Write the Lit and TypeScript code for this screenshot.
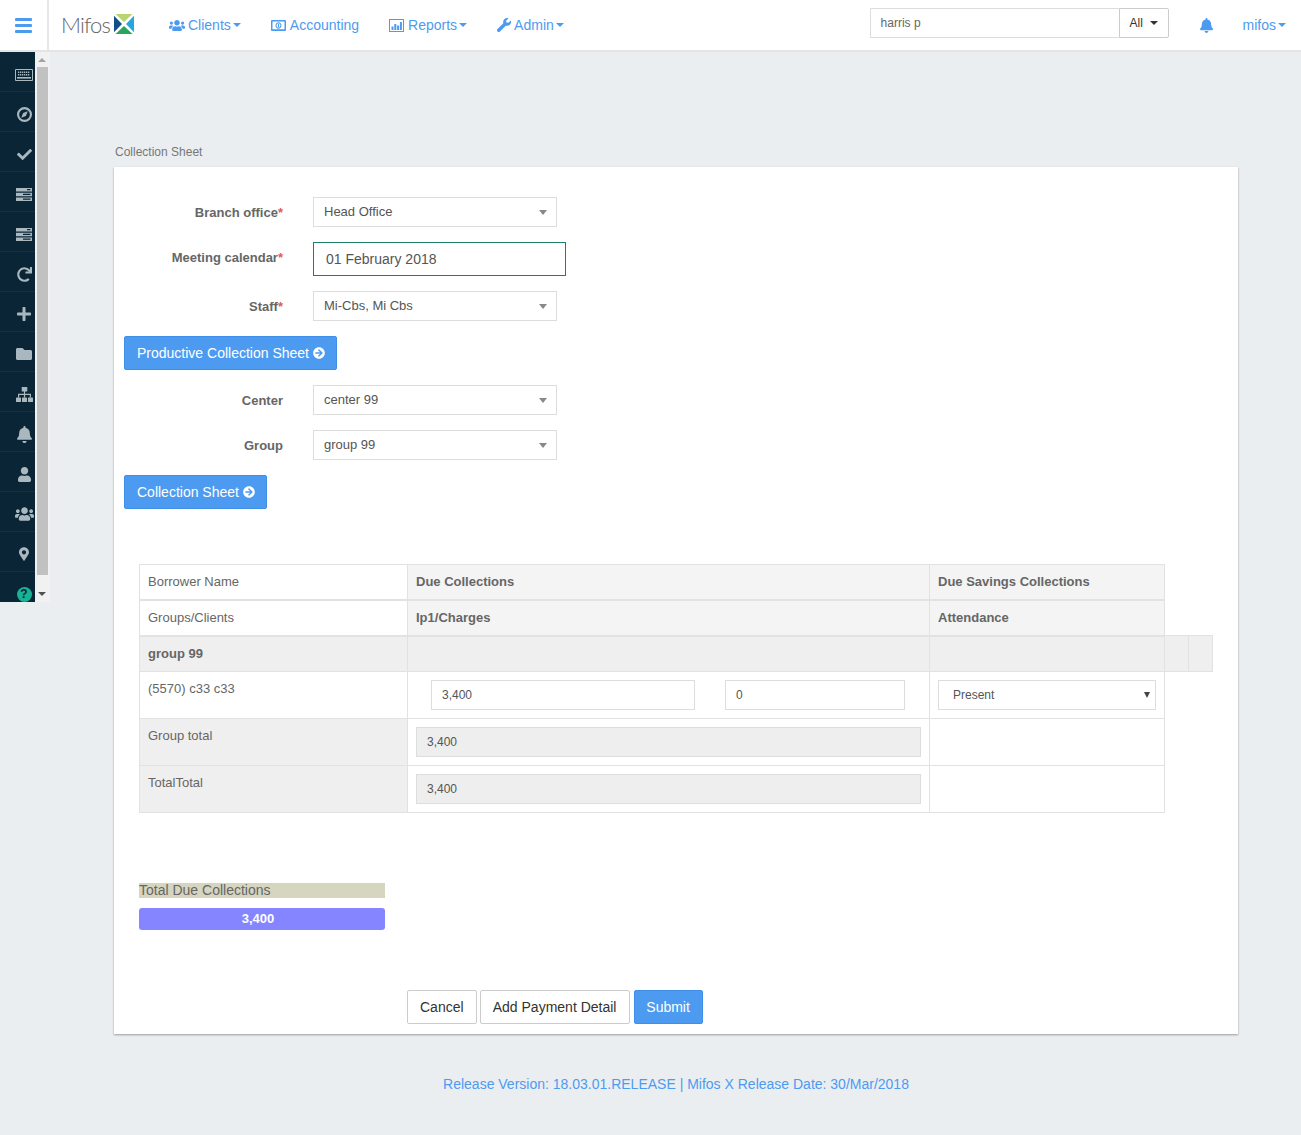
import { LitElement, html, css, svg } from "lit";
import { customElement } from "lit/decorators.js";

const P = {
  users: ["0 0 640 512", "M96 224c35.300 0 64-28.700 64-64s-28.700-64-64-64-64 28.700-64 64 28.700 64 64 64zm448 0c35.300 0 64-28.700 64-64s-28.700-64-64-64-64 28.700-64 64 28.700 64 64 64zm32 32h-64c-17.600 0-33.500 7.100-45.100 18.600 40.300 22.100 68.900 62 75.100 109.400h66c17.700 0 32-14.300 32-32v-32c0-35.300-28.700-64-64-64zm-256 0c61.900 0 112-50.100 112-112S381.900 32 320 32 208 82.100 208 144s50.100 112 112 112zm76.800 32h-8.300c-20.800 10-43.900 16-68.500 16s-47.600-6-68.500-16h-8.300C179.600 288 128 339.600 128 403.200V432c0 26.500 21.500 48 48 48h288c26.500 0 48-21.500 48-48v-28.800c0-63.600-51.600-115.200-115.200-115.200zm-223.700-13.400C161.500 263.100 145.600 256 128 256H64c-35.300 0-64 28.700-64 64v32c0 17.700 14.300 32 32 32h65.900c6.300-47.400 34.900-87.300 75.200-109.400z"],
  bell: ["0 0 448 512", "M224 512c35.320 0 63.970-28.650 63.970-64H160.030c0 35.350 28.650 64 63.970 64zm215.390-149.710c-19.320-20.760-55.470-51.990-55.470-154.290 0-77.700-54.480-139.900-127.940-155.160V32c0-17.670-14.320-32-31.980-32s-31.980 14.330-31.980 32v20.840C118.560 68.100 64.080 130.300 64.080 208c0 102.300-36.150 133.530-55.470 154.290-6 6.450-8.660 14.160-8.610 21.710.11 16.400 12.980 32 32.100 32h383.800c19.120 0 32-15.600 32.100-32 .05-7.550-2.610-15.270-8.610-21.710z"],
  wrench: ["0 0 512 512", "M507.730 109.100c-2.240-9.030-13.540-12.090-20.120-5.510l-74.360 74.360-67.880-11.310-11.310-67.880 74.360-74.360c6.620-6.620 3.430-17.900-5.660-20.160-47.380-11.740-99.550.91-136.580 37.930-39.640 39.640-50.550 97.100-34.050 147.200L18.740 402.760c-24.990 24.990-24.990 65.510 0 90.500 24.990 24.990 65.510 24.990 90.500 0l213.210-213.210c50.120 16.710 107.470 5.680 147.370-34.220 37.070-37.070 49.700-89.320 37.910-136.730z"],
  arrow: ["0 0 512 512", "M256 8c137 0 248 111 248 248S393 504 256 504 8 393 8 256 119 8 256 8zm-28.900 143.600l75.500 72.400H120c-13.300 0-24 10.700-24 24v16c0 13.300 10.700 24 24 24h182.600l-75.500 72.400c-9.700 9.300-9.900 24.800-.4 34.300l11 10.900c9.400 9.400 24.600 9.400 33.900 0L404.300 273c9.400-9.400 9.400-24.600 0-33.900L271.600 106.700c-9.400-9.400-24.600-9.400-33.900 0l-11 10.900c-9.300 9.600-9.100 25.100.4 34.400z"],
  check: ["0 0 512 512", "M173.898 439.404l-166.400-166.400c-9.997-9.997-9.997-26.206 0-36.204l36.203-36.204c9.997-9.998 26.207-9.998 36.204 0L192 312.690 432.095 72.596c9.997-9.997 26.207-9.997 36.204 0l36.203 36.204c9.997 9.997 9.997 26.206 0 36.204l-294.400 294.401c-9.998 9.997-26.207 9.997-36.204-.001z"],
  folder: ["0 0 512 512", "M464 128H272l-64-64H48C21.490 64 0 85.490 0 112v288c0 26.510 21.490 48 48 48h416c26.510 0 48-21.490 48-48V176c0-26.510-21.490-48-48-48z"],
  marker: ["0 0 384 512", "M172.268 501.670C26.970 291.031 0 255.403 0 192 0 85.961 85.961 0 192 0s192 85.961 192 192c0 63.403-26.970 99.031-172.268 309.670-9.535 13.774-29.930 13.773-39.464 0zM192 272c44.183 0 80-35.817 80-80s-35.817-80-80-80-80 35.817-80 80 35.817 80 80 80z"],
  redo: ["0 0 512 512", "M500.330 0h-47.410a12 12 0 0 0-12 12.570l4 82.760A247.420 247.420 0 0 0 256 8C119.340 8 7.900 119.530 8 256.190 8.100 393.070 119.100 504 256 504a247.100 247.100 0 0 0 166.180-63.910 12 12 0 0 0 .48-17.430l-34-34a12 12 0 0 0-16.380-.55A176 176 0 1 1 402.100 157.800l-101.530-4.870a12 12 0 0 0-12.570 12v47.410a12 12 0 0 0 12 12h200.330a12 12 0 0 0 12-12V12a12 12 0 0 0-12-12z"],
  plus: ["0 0 448 512", "M416 208H272V64c0-17.670-14.330-32-32-32h-32c-17.670 0-32 14.330-32 32v144H32c-17.670 0-32 14.330-32 32v32c0 17.670 14.330 32 32 32h144v144c0 17.670 14.330 32 32 32h32c17.670 0 32-14.330 32-32V304h144c17.670 0 32-14.330 32-32v-32c0-17.670-14.330-32-32-32z"],
  user: ["0 0 448 512", "M224 256c70.700 0 128-57.300 128-128S294.700 0 224 0 96 57.300 96 128s57.300 128 128 128zm89.600 32h-16.700c-22.200 10.200-46.900 16-72.900 16s-50.600-5.800-72.900-16h-16.700C60.200 288 0 348.200 0 422.400V464c0 26.500 21.500 48 48 48h352c26.500 0 48-21.500 48-48v-41.600c0-74.200-60.200-134.400-134.400-134.400z"],
};

const ic = (k: keyof typeof P, w: number, h: number) =>
  html`<svg class="ic" width=${w} height=${h} viewBox=${P[k][0]} fill="currentColor"><path d=${P[k][1]}></path></svg>`;

const keyboard = html`<svg class="ic kb" width="18" height="12" viewBox="0 0 18 12" fill="currentColor">
  <path fill-rule="evenodd" d="M1 0h16a1 1 0 0 1 1 1v10a1 1 0 0 1-1 1H1a1 1 0 0 1-1-1V1a1 1 0 0 1 1-1zm0 1v10h16V1z"></path>
  ${[3, 5, 7, 9, 11, 13].map((x) => svg`<rect x=${x} y="2.500" width="1.300" height="1.500"></rect><rect x=${x} y="5" width="1.300" height="1.500"></rect>`)}
  <rect x="2" y="8" width="14" height="1.600"></rect></svg>`;

const compass = html`<svg class="ic" width="15" height="15" viewBox="0 0 14 14" fill="currentColor">
  <path fill-rule="evenodd" d="M7 0a7 7 0 1 1 0 14A7 7 0 0 1 7 0zm0 2a5 5 0 1 0 0 10A5 5 0 0 0 7 2z"></path>
  <path d="M10 4 8.300 8.300 4 10l1.700-4.300z"></path></svg>`;

const server = html`<svg class="ic" width="16" height="13" viewBox="0 0 16 13" fill="currentColor">
  <path fill-rule="evenodd" d="M0 0h16v3.500H0zM11 1v1.200h3.500V1zM0 4.700h16v3.500H0zM7 5.700v1.200h7.500V5.700zM0 9.500h16V13H0zM7 10.500v1.200h7.500v-1.200z"></path></svg>`;

const sitemap = html`<svg class="ic" width="17" height="15" viewBox="0 0 17 15" fill="currentColor">
  <rect x="5.700" y="0" width="5.600" height="4.500" rx=".6"></rect>
  <rect x="0" y="10.500" width="5" height="4.500" rx=".6"></rect>
  <rect x="6" y="10.500" width="5" height="4.500" rx=".6"></rect>
  <rect x="12" y="10.500" width="5" height="4.500" rx=".6"></rect>
  <path d="M7.900 4h1.200v2.800h5.900v3.700h-1.200V8H9.100v2.500H7.900V8H3.200v2.500H2V6.800h5.900z"></path></svg>`;

const question = html`<span class="q">?</span>`;

const money = html`<svg class="ic" width="15" height="11" viewBox="0 0 15 11" fill="currentColor">
  <path fill-rule="evenodd" d="M1 0h13a1 1 0 0 1 1 1v9a1 1 0 0 1-1 1H1a1 1 0 0 1-1-1V1a1 1 0 0 1 1-1zm.600 1.600a1 1 0 0 1-.1.1v7.600h12V1.600z"></path>
  <path fill-rule="evenodd" d="M7.500 2.200c1.700 0 3 1.500 3 3.300s-1.300 3.300-3 3.300-3-1.500-3-3.300 1.300-3.300 3-3.300zm0 1.100c-1.100 0-1.900 1-1.900 2.200s.8 2.200 1.900 2.200 1.900-1 1.900-2.200-.8-2.200-1.900-2.200z"></path>
  <rect x="7" y="3.800" width="1.100" height="3.400"></rect></svg>`;

const chart = html`<svg class="ic" width="15" height="13" viewBox="0 0 15 13" fill="currentColor">
  <path fill-rule="evenodd" d="M0 0h15v13H0zm1 1v11h13V1z"></path>
  <rect x="2.500" y="7.500" width="2" height="3.500"></rect><rect x="5.300" y="5" width="2" height="6"></rect>
  <rect x="8.100" y="6.500" width="2" height="4.500"></rect><rect x="10.900" y="3" width="2" height="8"></rect></svg>`;

const logo = html`<svg class="mark" width="20" height="20" viewBox="0 0 20 20">
  <polygon points="1.500,0 18.500,0 10,8" fill="#b7d672"></polygon>
  <polygon points="0,1.800 8,10 0,18.200" fill="#124f85"></polygon>
  <polygon points="20,1.800 20,18.200 12,10" fill="#27a6dc"></polygon>
  <polygon points="1.500,20 10,12 18.500,20" fill="#2aa65c"></polygon></svg>`;

@customElement("app-root")
export class AppRoot extends LitElement {
  static styles = css`
    :host { display: block; min-height: 1135px; background: #ebeef1; font-family: "Liberation Sans", Arial, sans-serif; color: #666; font-size: 13px; line-height: 18.57px; }
    * { box-sizing: border-box; }
    .ic { display: block; flex: none; }
    .mark { display: block; flex: none; margin-top: -2px; }
    .top { height: 52px; background: #fff; border-bottom: 2px solid #e4e4e4; display: flex; align-items: center; color: #4d9bf0; font-size: 14px; }
    .burger { width: 49px; height: 50px; border-right: 2px solid #e7e7e7; display: flex; flex-direction: column; gap: 3px; align-items: center; justify-content: center; padding-right: 1px; }
    .burger i { display: block; width: 17px; height: 3px; background: #4d9bf0; border-radius: 1px; }
    .logo { display: flex; align-items: center; margin-left: 12px; width: 73px; justify-content: space-between; }
    .logo span { font-family: Lato, sans-serif; font-weight: 300; font-size: 22px; letter-spacing: -.9px; color: #666; line-height: 30px; }
    .nav { display: flex; align-items: center; gap: 30px; margin-left: 35px; flex: 1; }
    .nav a { display: flex; align-items: center; gap: 3px; }
    .nav a.wide { gap: 4px; }
    .caret { display: inline-block; width: 0; height: 0; border-left: 4px solid transparent; border-right: 4px solid transparent; border-top: 4px solid currentColor; }
    .nav .caret { margin-left: -1px; }
    .nav .wide .caret { margin-left: -2px; }
    .search { display: flex; height: 30px; width: 299px; font-size: 12px; align-self: flex-start; margin-top: 8px; }
    .search .q1 { flex: 1; border: 1px solid #ddd; border-right: 0; padding: 5px 10px; color: #666; }
    .search .all { width: 50px; border: 1px solid #ccc; border-radius: 0 2px 2px 0; color: #333; padding: 5px 10px; display: flex; align-items: center; justify-content: space-between; }
    .search .caret { color: #333; }
    .bell { margin-left: 31px; color: #4d9bf0; }
    .me { margin-left: 30px; margin-right: 15px; display: flex; align-items: center; gap: 2px; }
    .body { display: flex; align-items: flex-start; }
    .side { width: 50px; height: 550px; flex: none; display: flex; overflow: hidden; }
    .rail { width: 35px; background: #0a2536; color: #a9b8be; }
    .rail div { height: 40px; border-bottom: 1px solid #1d2d38; display: flex; align-items: center; justify-content: center; padding: 5px 0 0 13px; width: 35px; }
    .kb { margin-top: 1px; }
    .q { width: 15px; height: 15px; border-radius: 50%; background: #16b394; color: #0a2536; font-weight: 700; font-size: 12px; line-height: 15px; text-align: center; display: block; flex: none; }
    .bar { width: 15px; background: #f1f1f1; display: flex; flex-direction: column; align-items: center; padding-right: 1px; }
    .up { width: 0; height: 0; border-left: 4px solid transparent; border-right: 4px solid transparent; border-bottom: 4px solid #a3a3a3; margin-top: 6px; }
    .thumb { width: 11px; height: 508px; background: #c1c1c1; margin: 5px 0 0 1px; }
    .down { width: 0; height: 0; border-left: 4px solid transparent; border-right: 4px solid transparent; border-top: 4px solid #505050; margin-top: 17px; }
    .main { flex: 1; padding: 91px 63px 0 64px; }
    .crumb { font-size: 12px; color: #777; margin: 0 0 6px 1px; line-height: 18px; height: 18px; }
    .card { background: #fff; box-shadow: 0 1px 2px rgba(0,0,0,.35); padding: 30px 0 10px; }
    .row { display: flex; margin-bottom: 15px; }
    .row label { width: 169px; padding-top: 7px; text-align: right; font-weight: 700; color: #666; margin-right: 30px; flex: none; }
    .row label b { color: #e05a5a; }
    .sel { width: 244px; height: 30px; border: 1px solid #ddd; padding: 0 10px; display: flex; align-items: center; justify-content: space-between; color: #555; background: #fff; }
    .sel .tri { width: 0; height: 0; border-left: 4px solid transparent; border-right: 4px solid transparent; border-top: 5px solid #888; margin-right: -1px; }
    .date { width: 253px; height: 34px; border: 1px solid #1a7f6b; padding: 0 12px; font-size: 14px; color: #555; display: flex; align-items: center; }
    .btn { display: inline-flex; align-items: center; justify-content: center; gap: 4px; height: 34px; padding: 0 12px; font-size: 14px; border: 1px solid #ccc; border-radius: 2px; background: #fff; color: #333; }
    .btn.p { background: #4d9bf0; border-color: #3f8fe8; color: #fff; }
    .go .btn { padding-right: 11px; }
    .go { margin: 0 0 15px 10px; }
    .go.last { margin-bottom: 55px; }
    table { border-collapse: collapse; table-layout: fixed; margin-left: 25px; width: 1073px; }
    td { border: 1px solid #e2e2e2; padding: 8px; vertical-align: top; }
    .h td { border-bottom-width: 2px; height: 36px; vertical-align: middle; padding: 1px 8px 0; }
    .h.first td { height: 35px; }
    .g { background: #f4f4f4; font-weight: 700; }
    .s { background: #efefef; }
    .gr td { height: 36px; vertical-align: middle; padding: 1px 8px 0; }
    .tr td { height: 47px; }
    .inp { height: 30px; border: 1px solid #ddd; padding: 0 10px; font-size: 12px; display: flex; align-items: center; color: #555; background: #fff; }
    .inp.ro { background: #eee; }
    .two { display: flex; padding-left: 15px; }
    .two .a { width: 264px; }
    .two .b { width: 180px; margin-left: 30px; }
    .pick { position: relative; width: 218px; height: 30px; }
    .pick::after { content: ""; position: absolute; right: 6px; top: 12px; width: 0; height: 0; border-left: 3px solid transparent; border-right: 3px solid transparent; border-top: 6px solid #444; }
    select { appearance: none; width: 218px; height: 30px; border: 1px solid #ddd; background: #fff; padding: 0 10px 0 14px; font: 12px "Liberation Sans", Arial, sans-serif; color: #555; display: block; border-radius: 0; }
    .tot { margin: 70px 0 0 25px; width: 246px; height: 15px; background: #d5d5c0; font-size: 14px; line-height: 15px; color: #666; white-space: nowrap; }
    .prog { margin: 10px 0 0 25px; width: 246px; height: 22px; background: #8585ff; border-radius: 3px; color: #fff; font-weight: 700; line-height: 22px; text-align: center; padding-right: 8px; }
    .acts { margin: 60px 0 0 293px; display: flex; }
    .acts .btn + .btn { margin-left: 3px; }
    .acts .btn.add { width: 150px; padding: 0; }
    .acts .btn.p { margin-left: 4px; width: 69px; padding: 0; }
    .foot { text-align: center; color: #4d9bf0; font-size: 14px; margin-top: 40px; line-height: 20px; }
  `;

  render() {
    const rail = [
      keyboard, compass, ic("check", 15, 15), server, server, ic("redo", 15, 15), ic("plus", 14, 16),
      ic("folder", 16, 16), sitemap, ic("bell", 15, 17), ic("user", 13, 15), ic("users", 19, 16), ic("marker", 10, 14), question,
    ];
    return html`
      <div class="top">
        <div class="burger"><i></i><i></i><i></i></div>
        <div class="logo"><span>Mifos</span>${logo}</div>
        <div class="nav">
          <a>${ic("users", 16, 13)}Clients<i class="caret"></i></a>
          <a class="wide">${money}Accounting</a>
          <a class="wide">${chart}Reports<i class="caret"></i></a>
          <a>${ic("wrench", 14, 14)}Admin<i class="caret"></i></a>
        </div>
        <div class="search"><div class="q1">harris p</div><div class="all">All<i class="caret"></i></div></div>
        <div class="bell">${ic("bell", 13, 15)}</div>
        <div class="me">mifos<i class="caret"></i></div>
      </div>
      <div class="body">
        <div class="side">
          <div class="rail">${rail.map((r) => html`<div>${r}</div>`)}</div>
          <div class="bar"><i class="up"></i><i class="thumb"></i><i class="down"></i></div>
        </div>
        <div class="main">
          <div class="crumb">Collection Sheet</div>
          <div class="card">
            <div class="row"><label>Branch office<b>*</b></label><div class="sel">Head Office<i class="tri"></i></div></div>
            <div class="row"><label>Meeting calendar<b>*</b></label><div class="date">01 February 2018</div></div>
            <div class="row"><label>Staff<b>*</b></label><div class="sel">Mi-Cbs, Mi Cbs<i class="tri"></i></div></div>
            <div class="go"><span class="btn p">Productive Collection Sheet ${ic("arrow", 12, 12)}</span></div>
            <div class="row"><label>Center</label><div class="sel">center 99<i class="tri"></i></div></div>
            <div class="row"><label>Group</label><div class="sel">group 99<i class="tri"></i></div></div>
            <div class="go last"><span class="btn p">Collection Sheet ${ic("arrow", 12, 12)}</span></div>
            <table>
              <colgroup><col style="width:268px" /><col style="width:522px" /><col style="width:235px" /><col style="width:24px" /><col style="width:24px" /></colgroup>
              <tr class="h first"><td>Borrower Name</td><td class="g">Due Collections</td><td class="g">Due Savings Collections</td></tr>
              <tr class="h"><td>Groups/Clients</td><td class="g">Ip1/Charges</td><td class="g">Attendance</td></tr>
              <tr class="gr"><td class="s"><b>group 99</b></td><td class="s"></td><td class="s"></td><td class="s"></td><td class="s"></td></tr>
              <tr class="tr"><td>(5570) c33 c33</td><td><div class="two"><div class="inp a">3,400</div><div class="inp b">0</div></div></td><td><div class="pick"><select><option>Present</option></select></div></td></tr>
              <tr class="tr"><td class="s">Group total</td><td><div class="inp ro">3,400</div></td><td></td></tr>
              <tr class="tr"><td class="s">TotalTotal</td><td><div class="inp ro">3,400</div></td><td></td></tr>
            </table>
            <div class="tot">Total Due Collections</div>
            <div class="prog">3,400</div>
            <div class="acts"><span class="btn">Cancel</span><span class="btn add">Add Payment Detail</span><span class="btn p">Submit</span></div>
          </div>
          <div class="foot">Release Version: 18.03.01.RELEASE | Mifos X Release Date: 30/Mar/2018</div>
        </div>
      </div>
    `;
  }
}
